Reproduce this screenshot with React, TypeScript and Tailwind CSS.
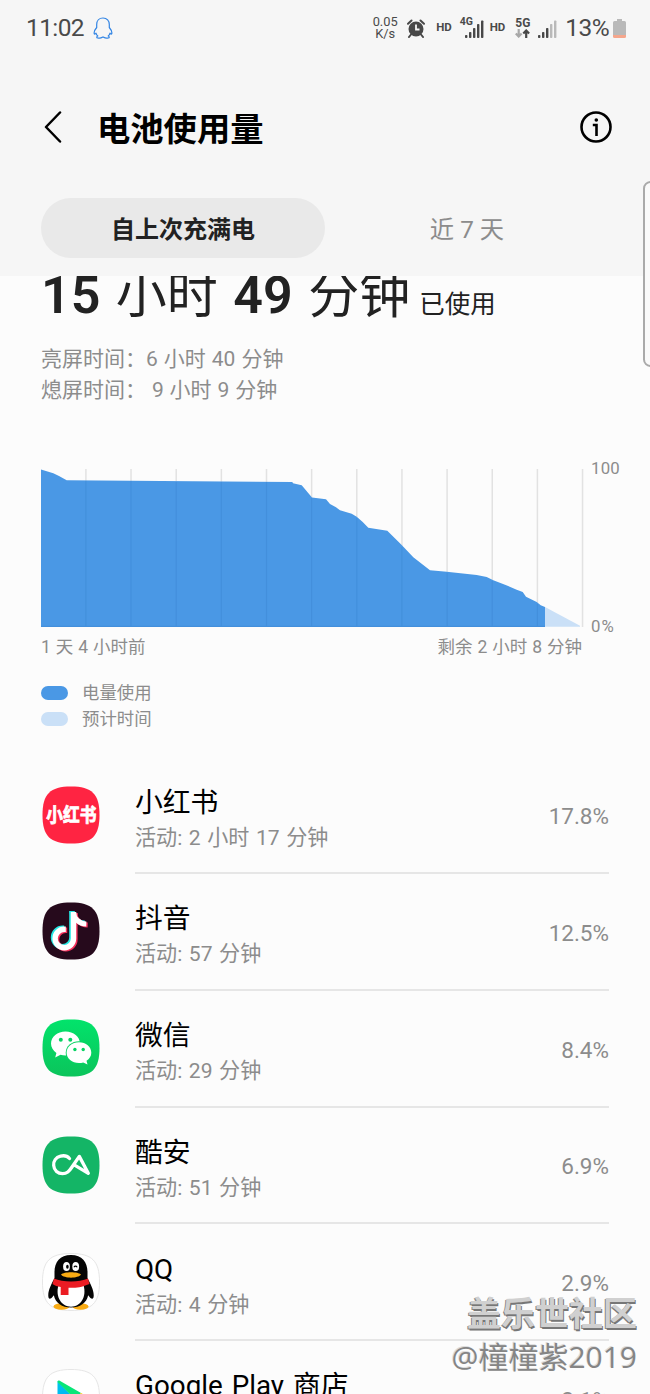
import React from 'react';

interface AppUsage {
  name: string;
  active: string;
  percent: string;
  icon: React.ReactNode;
}

const SQUIRCLE = 'M29 0.5C50 0.5 57.5 8 57.5 29S50 57.5 29 57.5S0.5 50 0.5 29S8 0.5 29 0.5Z';

const TikTokNote: React.FC<{ color: string; dx: number; dy: number }> = ({ color, dx, dy }) => (
  <g transform={`translate(${dx} ${dy})`} fill="none" stroke={color} strokeWidth="5.4">
    <path d="M31.7 10V36.5A9.2 9.2 0 1 1 22.5 27.3H24" />
    <path d="M31.7 10C32 16.5 37 21.8 44.5 22" strokeWidth="5" />
  </g>
);

const XiaohongshuIcon = () => (
  <svg width="58" height="58" viewBox="0 0 58 58">
    <path d={SQUIRCLE} fill="#ff2442" />
    <text
      transform="translate(4.2 36) scale(0.88 1)"
      textLength="57"
      fill="#fff"
      stroke="#fff"
      strokeWidth="0.8"
      fontSize="19"
      fontWeight="700"
      fontFamily="'Noto Sans CJK SC', sans-serif"
    >
      小红书
    </text>
  </svg>
);

const DouyinIcon = () => (
  <svg width="58" height="58" viewBox="0 0 58 58">
    <path d={SQUIRCLE} fill="#260a1c" />
    <TikTokNote color="#25e8e4" dx={-1.8} dy={-1} />
    <TikTokNote color="#f5315c" dx={1.2} dy={1} />
    <TikTokNote color="#fff" dx={-0.2} dy={0} />
  </svg>
);

const WechatIcon = () => (
  <svg width="58" height="58" viewBox="0 0 58 58">
    <defs>
      <linearGradient id="wechat" x1="0" y1="0" x2="0" y2="1">
        <stop offset="0" stopColor="#02e36b" />
        <stop offset="1" stopColor="#0bc45b" />
      </linearGradient>
    </defs>
    <path d={SQUIRCLE} fill="url(#wechat)" />
    <path d="M23.5 12.5C15.5 12.5 9 17.8 9 24.6c0 3.9 2.1 7.2 5.4 9.3L13.2 38.5l5.3-2.7c1.6.5 3.3.7 5 .7C31.5 36.5 38 31.4 38 24.6S31.5 12.5 23.5 12.5Z" fill="#fff" />
    <ellipse cx="37" cy="33.7" rx="13.3" ry="11.5" fill="#07d362" />
    <path d="M37 23.3C30 23.3 24.6 27.9 24.6 33.7S30 44 37 44c1.5 0 2.9-.2 4.2-.6l4.3 2.1-1-3.7c2.9-1.9 4.8-4.8 4.8-8.1C49.3 27.9 44 23.3 37 23.3Z" fill="#fff" />
    <g fill="#07d362">
      <circle cx="18.8" cy="20.7" r="2" />
      <circle cx="28.3" cy="20.7" r="2" />
      <circle cx="32.9" cy="30.5" r="1.7" />
      <circle cx="41.2" cy="30.5" r="1.7" />
    </g>
  </svg>
);

const CoolapkIcon = () => (
  <svg width="58" height="58" viewBox="0 0 58 58">
    <path d={SQUIRCLE} fill="#14b566" />
    <path
      d="M27.5 22.5C24.8 19.5 21 19.5 18.5 20.2C13.7 21.4 11.4 25.5 11.7 29.5C12 34.5 16 37.7 20.5 37.7C25 37.7 27 35.5 30 31L37.3 20.4L46.3 37.3L33 29.3"
      fill="none"
      stroke="#fff"
      strokeWidth="3.3"
      strokeLinecap="round"
      strokeLinejoin="round"
    />
  </svg>
);

const QQIcon = () => (
  <svg width="58" height="58" viewBox="0 0 58 58">
    <path d={SQUIRCLE} fill="#fff" stroke="#e6e6e6" />
    <ellipse cx="19.5" cy="53.5" rx="8" ry="3.2" fill="#f9ab13" />
    <ellipse cx="38.5" cy="53.5" rx="8" ry="3.2" fill="#f9ab13" />
    <path d="M29 2C18 2 12.5 9 12.5 19v6C9.5 31 6 37 6.3 43c.2 4 2.5 3.5 5.5-.8C13.5 50 20 54.5 29 54.5S44.5 50 46.2 42.2c3 4.3 5.3 4.8 5.5.8C52 37 48.5 31 45.5 25v-6C45.5 9 40 2 29 2Z" fill="#050505" />
    <path d="M16.5 32C13 44 19.5 53.7 29 53.7S45 44 41.5 32Z" fill="#fff" />
    <path d="M12 25.5C21 29.5 37 29.5 46 25.5L47.5 31C38 34.8 33 35 26.5 34.8V42h-7.8V34C15.5 33.5 12.5 32.5 10.5 31Z" fill="#eb1c23" />
    <ellipse cx="24.5" cy="13.5" rx="3.4" ry="4.6" fill="#fff" />
    <ellipse cx="33.7" cy="13.5" rx="3.4" ry="4.6" fill="#fff" />
    <ellipse cx="25.4" cy="13.7" rx="1.3" ry="2" fill="#050505" />
    <path d="M31.9 14.2c.8-1.4 2.4-1.4 3.3 0" fill="none" stroke="#050505" strokeWidth="1.1" />
    <path d="M19 21.5C22 18.5 36 18.5 39 21.5C36 25.7 22 25.7 19 21.5Z" fill="#f9ab13" />
  </svg>
);

const PlayIcon = () => (
  <svg width="58" height="58" viewBox="0 0 58 58">
    <defs>
      <linearGradient id="play" x1="0" y1="0" x2="0.3" y2="1">
        <stop offset="0" stopColor="#00c8e8" />
        <stop offset="1" stopColor="#00a5ff" />
      </linearGradient>
    </defs>
    <path d={SQUIRCLE} fill="#fff" stroke="#e6e6e6" />
    <path d="M15.5 12V46L32 29Z" fill="url(#play)" />
    <path d="M15.5 13C16 11 17.5 11.5 19 12.4L39 24L33 30Z" fill="#08e678" />
    <path d="M39 24L46 28C47 29 47 30 46 31L39 35L33 29.5Z" fill="#ffcb05" />
  </svg>
);

const apps: AppUsage[] = [
  { name: '小红书', active: '活动: 2 小时 17 分钟', percent: '17.8%', icon: <XiaohongshuIcon /> },
  { name: '抖音', active: '活动: 57 分钟', percent: '12.5%', icon: <DouyinIcon /> },
  { name: '微信', active: '活动: 29 分钟', percent: '8.4%', icon: <WechatIcon /> },
  { name: '酷安', active: '活动: 51 分钟', percent: '6.9%', icon: <CoolapkIcon /> },
  { name: 'QQ', active: '活动: 4 分钟', percent: '2.9%', icon: <QQIcon /> },
  { name: 'Google Play 商店', active: '活动: 1 分钟', percent: '2.1%', icon: <PlayIcon /> },
];

const Signal: React.FC<{ level: number }> = ({ level }) => (
  <svg width="19" height="18" viewBox="0 0 19 18">
    {[3, 6, 10, 14, 17.5].map((h, i) => (
      <rect key={h} x={i * 4} y={18 - h} width="2.4" height={h} rx="0.8" fill={i < level ? '#484848' : '#b9b9b9'} />
    ))}
  </svg>
);

const StatusBar = () => (
  <div className="flex h-14 items-center pl-[26px] pr-6 text-[#4a4a4a]">
    <span className="text-[24.5px] tracking-[-0.6px]">11:02</span>
    <svg className="ml-[9px]" width="20" height="22" viewBox="0 0 20 22" fill="none" stroke="#3385e4" strokeWidth="1.2" strokeLinejoin="round">
      <path d="M10 1C6 1 3.7 3.8 3.7 7.5v3C2 12.5.8 14.5 1.2 16.5c.3 1 1.2.5 1.800-.3.3 1.3 1 2.2 1.8 2.8-1.3.5-1.5 1.7 0 2 2 .4 3.5 0 4.5-.8h1.4c1 .8 2.5 1.2 4.5.8 1.5-.3 1.3-1.5 0-2 .8-.6 1.5-1.5 1.8-2.800.6.8 1.5 1.3 1.8.3.4-2-.8-4-2.500-6v-3C16.3 3.8 14 1 10 1Z" />
    </svg>
    <div className="ml-auto flex items-center">
      <div className="flex w-[26px] flex-col items-center text-[12.8px] leading-[12px]">
        <span>0.05</span>
        <span>K/s</span>
      </div>
      <svg className="ml-[9px]" width="18" height="19" viewBox="0 0 18 19">
        <circle cx="9" cy="10" r="7.5" fill="#484848" />
        <path d="M1 4.8L4.5 1.5M17 4.8L13.5 1.5M4 15.5L2 18M14 15.5L16 18" stroke="#484848" strokeWidth="2" strokeLinecap="round" />
        <path d="M9 5.5V10.5H12.5" fill="none" stroke="#f6f6f6" strokeWidth="1.8" />
      </svg>
      <span className="ml-[11px] text-[11.5px] font-bold">HD</span>
      <div className="ml-2 flex h-[22px] w-[24px] flex-col">
        <span className="text-[10.5px] font-bold leading-[9px]">4G</span>
        <div className="-mt-[6px] ml-[5px]">
          <Signal level={5} />
        </div>
      </div>
      <span className="ml-[6px] text-[11.5px] font-bold">HD</span>
      <div className="ml-[10px] w-4">
        <div className="text-[12px] font-bold leading-[11px]">5G</div>
        <svg className="block" width="15" height="9" viewBox="0 0 15 9" fill="none" strokeWidth="2.2">
          <path d="M3.7 0V7.500M0.8 4.5L3.7 7.5L6.6 4.5" stroke="#a8a8a8" />
          <path d="M11.2 9V1.5M8.3 4.5L11.2 1.5L14.1 4.5" stroke="#484848" />
        </svg>
      </div>
      <div className="ml-[7px] mt-px">
        <Signal level={3} />
      </div>
      <span className="ml-[8px] text-[24.5px] tracking-[-0.6px]">13%</span>
      <svg className="ml-[4px]" width="13" height="19" viewBox="0 0 13 19">
        <path d="M4 0h5v2h2.5Q13 2 13 3.5V16H0V3.5Q0 2 1.5 2H4Z" fill="#b9b9b9" />
        <path d="M0 16H13V17.5Q13 19 11.5 19H1.5Q0 19 0 17.5Z" fill="#f5a68c" />
      </svg>
    </div>
  </div>
);

const BatteryChart = () => (
  <svg width="544" height="160" viewBox="40 468 544 160" className="block">
    <g stroke="#e2e2e2" strokeWidth="1.5">
      {Array.from({ length: 12 }, (_, i) => (
        <path key={i} d={`M${85.9 + i * 45.15} 469V627`} />
      ))}
    </g>
    <path
      d="M41 469.5L53.3 473.3L59 476L66.7 480.3L292.3 482L293 483.3L301.7 485.3L312 497.5L326 499.3L330 504L336 507.3L340 510.3L351.7 513.7L356.7 516.7L362.7 522L368.3 527.8L387.3 530.7L401.7 545L413.3 557.3L430 570.3L446.7 571.7L476.7 575L486.7 577L493.3 580.3L505 584.7L516.7 589.7L522.7 592L526 596.7L536.7 602L540.7 605.3L545 607V626.7H41Z"
      fill="#4a98e5"
    />
    <path d="M545 607L580 625.7V626.7H545Z" fill="#cae0f7" />
    <g stroke="#438fdc" strokeWidth="1.2">
      <path d="M85.9 481V626M131 481V626M176.2 482V626M221.3 482V626M266.5 482V626M311.6 498V626M356.8 518V626M401.9 547V626M447.1 573V626M492.2 581V626M537.4 604V626" />
      <path d="M41 626.3H545" />
    </g>
  </svg>
);

const App: React.FC = () => {
  return (
    <div className="relative h-[1394px] w-[650px] overflow-hidden bg-[#fcfcfc] font-['Roboto','Noto_Sans_CJK_SC',sans-serif] text-[#8c8c8c]">
      <header className="h-[276px] bg-[#f6f6f6]">
        <StatusBar />
        <div className="flex h-[142px] items-center pl-[44px] pr-[38px] text-black">
          <svg width="18" height="32" viewBox="0 0 18 32" fill="none" stroke="currentColor" strokeWidth="2.5" strokeLinecap="round" strokeLinejoin="round">
            <path d="M16 1.5L2 16L16 30.5" />
          </svg>
          <h1 className="ml-[35px] pt-[5px] text-[33.3px] font-bold leading-none">电池使用量</h1>
          <svg className="ml-auto" width="32" height="32" viewBox="0 0 32 32" fill="none" stroke="currentColor" strokeWidth="2.6">
            <circle cx="16" cy="16" r="14.5" />
            <path d="M12.8 14H16.5V25" />
            <circle cx="16.3" cy="9" r="1.8" fill="currentColor" stroke="none" />
          </svg>
        </div>
        <div className="flex h-[60px] px-[41px]">
          <div className="flex w-[284px] items-center justify-center rounded-full bg-[#e9e9e9] pt-[3px] text-[24px] font-bold text-[#222]">
            自上次充满电
          </div>
          <div className="flex flex-1 items-center justify-center pt-[4px] text-[24.3px]">近 7 天</div>
        </div>
      </header>

      {/* the summary scrolls under the header, so its first line is cut */}
      <section className="h-[192px] overflow-hidden px-[41px]">
        <div className="-mt-4 flex h-[70px] items-baseline pt-px text-[#222]">
          <p className="whitespace-pre text-[51px] leading-[70px] [word-spacing:2.8px]">
            <span className="text-[52px] font-semibold">15</span> 小时 <span className="text-[52px] font-semibold">49</span> 分钟
          </p>
          <span className="ml-[9px] text-[25.5px]">已使用</span>
        </div>
        <p className="mt-[14px] whitespace-pre text-[21px] leading-[31px] [word-spacing:0.8px]">亮屏时间：6 小时 40 分钟</p>
        <p className="whitespace-pre text-[21px] leading-[31px] [word-spacing:0.7px]">熄屏时间： 9 小时 9 分钟</p>
      </section>

      <section className="h-[288px] pl-10">
        <div className="flex h-[160px]">
          <BatteryChart />
          <div className="-mt-[10px] ml-[7px] flex h-[178px] flex-col justify-between text-[16.8px] leading-5 tracking-[0.2px]">
            <span>100</span>
            <span className="tracking-[1px]">0%</span>
          </div>
        </div>
        <div className="mt-[7px] flex w-[542px] justify-between pl-px text-[17.5px] leading-6 [word-spacing:0.6px]">
          <span>1 天 4 小时前</span>
          <span>剩余 2 小时 8 分钟</span>
        </div>
        <ul className="mt-[20px] pl-px text-[17.4px] leading-[26px]">
          <li className="flex items-center">
            <span className="mr-[14px] h-[14px] w-[27px] rounded-full bg-[#4a98e5]" />
            <span className="pt-px">电量使用</span>
          </li>
          <li className="-mt-px flex items-center">
            <span className="mr-[14px] h-[14px] w-[27px] rounded-full bg-[#cae0f7]" />
            <span className="pt-px">预计时间</span>
          </li>
        </ul>
      </section>

      <ul>
        {apps.map((app) => (
          <li key={app.name} className="flex h-[116.75px] pl-[42px] pr-[41px]">
            <div className="mt-[29.5px] w-[58px]">{app.icon}</div>
            <div className="ml-[35px] flex h-[118px] flex-1 items-center justify-between border-b-2 border-[#e6e6e6]">
              <div className="pt-[11px]">
                <div className="text-[27.8px] leading-[36px] text-black [word-spacing:2px]">{app.name}</div>
                <div className="text-[21.1px] leading-[34px] [word-spacing:1.3px]">{app.active}</div>
              </div>
              <span className="pt-[6px] text-[22.5px]">{app.percent}</span>
            </div>
          </li>
        ))}
      </ul>

      {/* edge panel handle */}
      <div className="absolute -right-2 top-[181px] h-[186px] w-[15px] rounded-lg border-2 border-[#aaa] bg-[#fafafa]" />

      {/* watermark */}
      <div className="absolute right-[13px] top-[1289px] text-right font-['Noto_Sans_CJK_SC',sans-serif]">
        <div className="text-[34px] font-bold leading-[46px] text-[#d0d0d0] [text-shadow:1px_2px_0_#777,-1px_1px_0_#888]">盖乐世社区</div>
        <div className="font-['Open_Sans','Noto_Sans_CJK_SC',sans-serif] text-[30px] leading-[44px] text-[#858585] [text-shadow:-1px_-1px_0_#ddd]">@橦橦紫2019</div>
      </div>
    </div>
  );
};

export default App;
